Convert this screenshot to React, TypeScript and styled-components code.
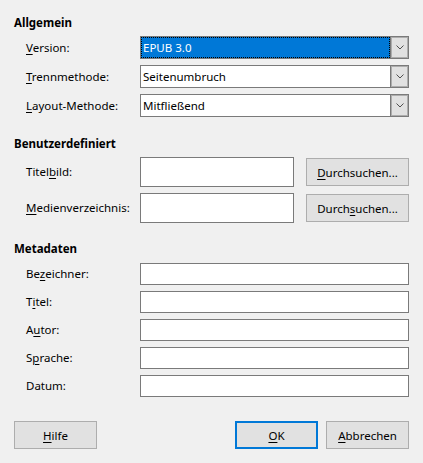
import { Fragment } from 'react';
import styled, { createGlobalStyle } from 'styled-components';

const Global = createGlobalStyle`
  html, body { margin: 0; padding: 0; background: #f0f0f0; }
  body { font-family: "Segoe UI", "Noto Sans", "Liberation Sans", sans-serif; font-size: 11.5px; color: #000; }
`;

const Dialog = styled.div`
  width: 423px;
  height: 463px;
  box-sizing: border-box;
  padding: 15px 14px 14px 14px;
  display: flex;
  flex-direction: column;
`;

const Heading = styled.div<{ $gap?: number }>`
  font-weight: bold;
  line-height: 16px;
  height: 16px;
  margin-top: ${(p) => p.$gap ?? 0}px;
`;

const Rows = styled.div<{ $cols?: string; $gap: number; $top: number }>`
  display: grid;
  grid-template-columns: ${(p) => p.$cols ?? '114px 1fr'};
  row-gap: ${(p) => p.$gap}px;
  padding-left: 12px;
  margin-top: ${(p) => p.$top}px;
  align-items: center;
`;

const Label = styled.label`
  line-height: 16px;
  white-space: nowrap;
  u { text-decoration-thickness: 1px; text-underline-offset: 2px; }
`;

const Combo = styled.div`
  display: flex;
  height: 23px;
  box-sizing: border-box;
  border: 1px solid #7a7a7a;
  background: #fff;
`;

const ComboValue = styled.div<{ $focus?: boolean }>`
  flex: 1;
  display: flex;
  align-items: center;
  padding-left: 2px;
  line-height: 16px;
  background: ${(p) => (p.$focus ? '#0078d7' : '#fff')};
  color: ${(p) => (p.$focus ? '#fff' : '#000')};
  outline: ${(p) => (p.$focus ? '1px dotted #000' : 'none')};
  outline-offset: -1px;
`;

const DropButton = styled.div`
  width: 18px;
  box-sizing: border-box;
  background: #e1e1e1;
  border-left: 1px solid #7a7a7a;
  box-shadow: inset 0 0 0 1px #adadad;
  display: flex;
  align-items: center;
  justify-content: center;
`;

const TextBox = styled.div<{ $h: number }>`
  height: ${(p) => p.$h}px;
  box-sizing: border-box;
  border: 1px solid #7a7a7a;
  background: #fff;
`;

const Button = styled.button<{ $default?: boolean; $w?: number; $left?: number }>`
  width: ${(p) => p.$w ?? 83}px;
  height: 28px;
  margin-left: ${(p) => p.$left ?? 0}px;
  box-sizing: border-box;
  background: #e1e1e1;
  border: ${(p) => (p.$default ? '2px solid #0078d7' : '1px solid #adadad')};
  font: inherit;
  color: #000;
  padding: 0;
  u { text-decoration-thickness: 1px; text-underline-offset: 2px; }
`;

const Footer = styled.div`
  margin-top: 24px;
  display: flex;
  justify-content: space-between;
`;

const ButtonGroup = styled.div`
  display: flex;
  gap: 8px;
`;

const Chevron = () => (
  <svg width="8" height="5" viewBox="0 0 8 5">
    <polyline points="0.5,0.5 4,4 7.5,0.5" fill="none" stroke="#505050" strokeWidth="1" />
  </svg>
);

const combos = [
  { pre: '', key: 'V', post: 'ersion:', value: 'EPUB 3.0', focus: true },
  { pre: '', key: 'T', post: 'rennmethode:', value: 'Seitenumbruch' },
  { pre: '', key: 'L', post: 'ayout-Methode:', value: 'Mitfließend' },
];

const meta = [
  { pre: 'Be', key: 'z', post: 'eichner:' },
  { pre: 'T', key: 'i', post: 'tel:' },
  { pre: 'A', key: 'u', post: 'tor:' },
  { pre: 'S', key: 'p', post: 'rache:' },
  { pre: 'Datum:', key: '', post: '' },
];

export default function App() {
  return (
    <Dialog>
      <Global />
      <Heading>Allgemein</Heading>
      <Rows $gap={6} $top={5}>
        {combos.map((c) => (
          <Fragment key={c.post}>
            <Label>
              {c.pre}
              <u>{c.key}</u>
              {c.post}
            </Label>
            <Combo>
              <ComboValue $focus={c.focus}>{c.value}</ComboValue>
              <DropButton>
                <Chevron />
              </DropButton>
            </Combo>
          </Fragment>
        ))}
      </Rows>

      <Heading $gap={19}>Benutzerdefiniert</Heading>
      <Rows $cols="114px 154px 115px" $gap={6} $top={5}>
        <Label>
          Titel<u>b</u>ild:
        </Label>
        <TextBox $h={30} />
        <Button $w={103} $left={12}>
          <u>D</u>urchsuchen...
        </Button>
        <Label>
          <u>M</u>edienverzeichnis:
        </Label>
        <TextBox $h={30} />
        <Button $w={103} $left={12}>
          Durch<u>s</u>uchen...
        </Button>
      </Rows>

      <Heading $gap={18}>Metadaten</Heading>
      <Rows $gap={6} $top={6}>
        {meta.map((m) => (
          <Fragment key={m.pre + m.post}>
            <Label>
              {m.pre}
              {m.key && <u>{m.key}</u>}
              {m.post}
            </Label>
            <TextBox $h={22} />
          </Fragment>
        ))}
      </Rows>

      <Footer>
        <Button>
          <u>H</u>ilfe
        </Button>
        <ButtonGroup>
          <Button $default>
            <u>O</u>K
          </Button>
          <Button>
            <u>A</u>bbrechen
          </Button>
        </ButtonGroup>
      </Footer>
    </Dialog>
  );
}
